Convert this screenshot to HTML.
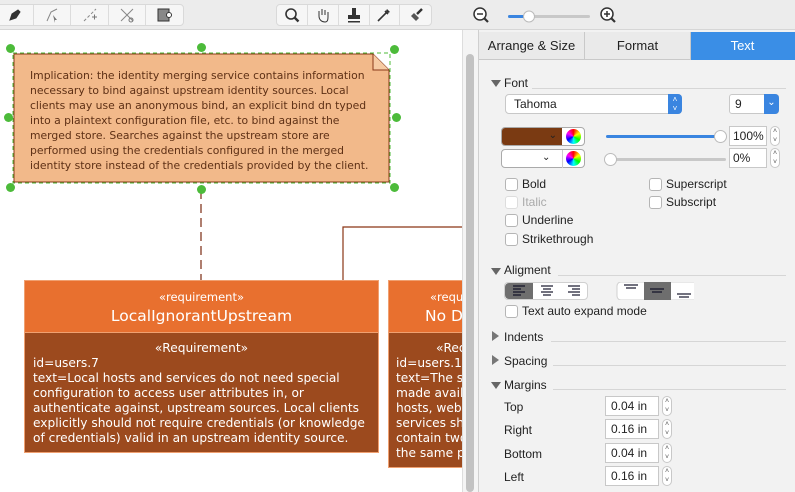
<!DOCTYPE html>
<html><head><meta charset="utf-8"><style>
*{box-sizing:border-box;margin:0;padding:0}
body{width:795px;height:492px;overflow:hidden;background:#fff;font-family:"Liberation Sans",sans-serif;position:relative;font-size:12px;color:#222}
.abs{position:absolute}
.tb{left:0;top:0;width:795px;height:30px;background:#ececec;border-bottom:1px solid #d6d6d6}
.grp{top:4px;height:22px;background:#f6f6f6;border:1px solid #d9d9d9;border-radius:4px;display:flex}
.grp div{width:38px;height:20px;border-right:1px solid #dcdcdc;display:flex;align-items:center;justify-content:center}
.grp div:last-child{border-right:none}
.panel{left:478px;top:30px;width:317px;height:462px;background:#f2f2f2;border-left:1px solid #cfcfcf}
.tab{top:32px;height:28px;line-height:28px;text-align:center;font-size:13px;background:#eaeaea;border-right:1px solid #c9c9c9;border-bottom:1px solid #c9c9c9}
.sec{font-size:12px;color:#222}
.line{height:1px;background:#d6d6d6}
.tri{width:0;height:0;border-left:5px solid transparent;border-right:5px solid transparent;border-top:7px solid #666}
.trir{width:0;height:0;border-top:5px solid transparent;border-bottom:5px solid transparent;border-left:7px solid #777}
.cb{width:13px;height:13px;border:1px solid #b5b5b5;border-radius:3px;background:#fff}
.lbl{font-size:12px}
.inp{background:#fff;border:1px solid #c8c8c8;height:20px;font-size:12px;padding-left:5px;line-height:18px}
.step{width:10px;height:20px;border:1px solid #c8c8c8;border-radius:5px;background:#fff;font-size:7px;text-align:center;line-height:9px;color:#555}
.h{width:9px;height:9px;border-radius:50%;background:#4cbb3a}
</style></head><body>
<div class="abs tb"></div>
<div class="abs grp" style="left:-4px;width:188px">
 <div><svg width="16" height="16"><path d="M3 13l2-6 6-4 2 2-4 6z M3 13l4-4" fill="#333" stroke="#333"/></svg></div>
 <div><svg width="16" height="16"><path d="M3 14l4-9 6-3" fill="none" stroke="#888"/><path d="M9 8l4 5-2 0 0 3z" fill="#777"/></svg></div>
 <div><svg width="16" height="16"><path d="M2 14l12-12" stroke="#888" fill="none" stroke-dasharray="3 2"/><path d="M10 10h5M12.5 7.5v5" stroke="#777"/></svg></div>
 <div><svg width="16" height="16"><path d="M2 14L14 2M2 2l12 12" stroke="#888" fill="none"/><circle cx="12" cy="13" r="2" fill="none" stroke="#777"/></svg></div>
 <div><svg width="16" height="16"><rect x="2" y="2" width="11" height="12" fill="#888" stroke="#333"/><circle cx="13" cy="8" r="2.5" fill="#fff" stroke="#333"/></svg></div>
</div>
<div class="abs grp" style="left:276px;width:156px">
 <div><svg width="16" height="16"><circle cx="7" cy="7" r="5" fill="none" stroke="#333" stroke-width="1.6"/><path d="M10.5 10.5l4 4" stroke="#333" stroke-width="2.4"/></svg></div>
 <div><svg width="16" height="16"><path d="M4 9V4M7 8V2M10 8V3M13 9V5M4 9c0 4 3 6 6 6s3-3 3-6" fill="none" stroke="#333"/></svg></div>
 <div><svg width="16" height="16"><rect x="6" y="1" width="4" height="7" fill="#333"/><rect x="2" y="8" width="12" height="4" fill="#333"/><rect x="2" y="14" width="12" height="1.5" fill="#333"/></svg></div>
 <div><svg width="16" height="16"><path d="M2 14l8-8M9 4l3 3" stroke="#333" stroke-width="1.6"/><path d="M11 2l3 3-2 1-2-2z" fill="#333"/></svg></div>
 <div><svg width="16" height="16"><path d="M3 9l5 5 3-3-5-5z" fill="#555"/><path d="M9 7l5-5" stroke="#333" stroke-width="2.4"/></svg></div>
</div>
<svg class="abs" style="left:472px;top:6px" width="150" height="20"><circle cx="8" cy="8" r="6" fill="#fff" stroke="#333" stroke-width="1.5"/><path d="M5 8h6" stroke="#333" stroke-width="1.5"/><path d="M12 12l4 4" stroke="#333" stroke-width="2.2"/>
<rect x="36" y="9" width="82" height="3" rx="1.5" fill="#c8c8c8"/><rect x="36" y="9" width="16" height="3" rx="1.5" fill="#3a85e0"/><circle cx="57" cy="10.5" r="5.5" fill="#fff" stroke="#bbb"/>
<circle cx="135" cy="8" r="6" fill="#fff" stroke="#333" stroke-width="1.5"/><path d="M132 8h6M135 5v6" stroke="#333" stroke-width="1.5"/><path d="M139 12l4 4" stroke="#333" stroke-width="2.2"/></svg>

<!-- canvas -->
<div class="abs" style="left:462px;top:30px;width:16px;height:462px;background:#f4f4f4;border-left:1px solid #ddd"></div>
<div class="abs" style="left:466px;top:54px;width:8px;height:438px;background:#c2c2c2;border-radius:4px"></div>

<svg class="abs" style="left:0;top:30px" width="462" height="462">
 <path d="M201 160v110" stroke="#7a2a10" stroke-width="1.2" stroke-dasharray="9 5"/>
 <path d="M343 250V197h119" fill="none" stroke="#8a3515" stroke-width="1.2"/>
 <path d="M14 24h359l16 16v112H14z" fill="#f2b98a" stroke="#8a3a1a"/>
 <path d="M373 24v16h16" fill="#f6cba4" stroke="#8a3a1a"/>
 <rect x="13" y="23" width="377" height="130" fill="none" stroke="#4cbb3a" stroke-dasharray="4 3"/>
</svg>
<div class="abs h" style="left:6px;top:44px"></div><div class="abs h" style="left:197px;top:43px"></div><div class="abs h" style="left:390px;top:45px"></div>
<div class="abs h" style="left:4px;top:113px"></div><div class="abs h" style="left:392px;top:113px"></div>
<div class="abs h" style="left:6px;top:183px"></div><div class="abs h" style="left:197px;top:185px"></div><div class="abs h" style="left:390px;top:183px"></div>
<div class="abs" style="left:30px;top:68px;width:355px;font-family:'DejaVu Sans',sans-serif;font-size:10.8px;line-height:15px;color:#5e3015;white-space:nowrap">Implication: the identity merging service contains information<br>necessary to bind against upstream identity sources. Local<br>clients may use an anonymous bind, an explicit bind dn typed<br>into a plaintext configuration file, etc. to bind against the<br>merged store. Searches against the upstream store are<br>performed using the credentials configured in the merged<br>identity store instead of the credentials provided by the client.</div>

<div class="abs" style="left:24px;top:280px;width:355px;height:173px;background:#9c4a1e;border:1px solid #f0a070;font-family:'DejaVu Sans',sans-serif;color:#fff;overflow:hidden">
 <div style="height:52px;background:#e8702f;border-bottom:1px solid #f0a070;text-align:center"><div style="font-size:11.5px;padding-top:9px">«requirement»</div><div style="font-size:15.5px;margin-top:3px">LocalIgnorantUpstream</div></div>
 <div style="font-size:12.2px;line-height:15px;padding:8px 0 0 8px;white-space:nowrap"><div style="text-align:center;padding-right:8px">«Requirement»</div>id=users.7<br>text=Local hosts and services do not need special<br>configuration to access user attributes in, or<br>authenticate against, upstream sources. Local clients<br>explicitly should not require credentials (or knowledge<br>of credentials) valid in an upstream identity source.</div>
</div>
<div class="abs" style="left:388px;top:280px;width:74px;height:188px;overflow:hidden">
<div style="width:200px;height:188px;background:#9c4a1e;border:1px solid #f0a070;font-family:'DejaVu Sans',sans-serif;color:#fff">
 <div style="height:52px;background:#e8702f;border-bottom:1px solid #f0a070"><div style="font-size:11.5px;padding:9px 0 0 41px">«requirement»</div><div style="font-size:15.5px;margin:3px 0 0 36px">No Duplicates</div></div>
 <div style="font-size:12.2px;line-height:15px;padding:8px 0 0 7px;white-space:nowrap"><div style="padding-left:40px">«Requirement»</div>id=users.11<br>text=The same<br>made available<br>hosts, web<br>services should<br>contain two<br>the same p</div>
</div></div>

<!-- panel -->
<div class="abs panel"></div>
<div class="abs tab" style="left:479px;width:106px">Arrange &amp; Size</div>
<div class="abs tab" style="left:585px;width:106px">Format</div>
<div class="abs tab" style="left:691px;width:104px;background:#3a8ee6;color:#fff;border-color:#3a8ee6">Text</div>

<div class="abs tri" style="left:491px;top:80px"></div><div class="abs sec" style="left:504px;top:76px">Font</div><div class="abs line" style="left:532px;top:88px;width:254px"></div>
<div class="abs inp" style="left:505px;top:94px;width:177px;border-radius:4px;padding-left:8px">Tahoma</div>
<div class="abs" style="left:668px;top:94px;width:14px;height:20px;background:#3a85e0;border-radius:0 4px 4px 0;color:#fff;font-size:8px;text-align:center;line-height:9px;padding-top:1px">˄<br>˅</div>
<div class="abs inp" style="left:729px;top:94px;width:50px;border-radius:3px">9</div>
<div class="abs" style="left:764px;top:94px;width:15px;height:20px;background:#3a85e0;border-radius:0 4px 4px 0;color:#fff;font-size:10px;text-align:center;line-height:18px">⌄</div>

<div class="abs" style="left:501px;top:127px;width:84px;height:19px;border:1px solid #aaa;border-radius:4px;background:#fff;overflow:hidden"><div style="width:60px;height:19px;background:#7a3a12;color:#222;text-align:right;padding-right:5px;font-size:10px;line-height:16px">⌄</div></div>
<div class="abs" style="left:566px;top:129px;width:15px;height:15px;border-radius:50%;background:conic-gradient(red,yellow,lime,cyan,blue,magenta,red)"></div>
<div class="abs" style="left:501px;top:149px;width:84px;height:19px;border:1px solid #aaa;border-radius:4px;background:#fff"><div style="position:absolute;left:40px;top:0;font-size:10px;line-height:16px">⌄</div><div style="position:absolute;left:60px;top:0;width:1px;height:18px;background:#ccc"></div></div>
<div class="abs" style="left:566px;top:151px;width:15px;height:15px;border-radius:50%;background:conic-gradient(red,yellow,lime,cyan,blue,magenta,red)"></div>
<div class="abs" style="left:606px;top:135px;width:112px;height:3px;background:#3a85e0;border-radius:2px"></div>
<div class="abs" style="left:714px;top:130px;width:13px;height:13px;border-radius:50%;background:#fff;border:1px solid #bbb"></div>
<div class="abs" style="left:606px;top:158px;width:120px;height:3px;background:#c8c8c8;border-radius:2px"></div>
<div class="abs" style="left:604px;top:153px;width:13px;height:13px;border-radius:50%;background:#fff;border:1px solid #bbb"></div>
<div class="abs inp" style="left:729px;top:126px;width:38px;padding-left:3px">100%</div><div class="abs step" style="left:770px;top:126px">˄<br>˅</div>
<div class="abs inp" style="left:729px;top:148px;width:38px;padding-left:3px">0%</div><div class="abs step" style="left:770px;top:148px">˄<br>˅</div>

<div class="abs cb" style="left:505px;top:178px"></div><div class="abs lbl" style="left:522px;top:177px">Bold</div>
<div class="abs cb" style="left:505px;top:196px;border-color:#ddd"></div><div class="abs lbl" style="left:522px;top:195px;color:#aaa">Italic</div>
<div class="abs cb" style="left:505px;top:214px"></div><div class="abs lbl" style="left:522px;top:213px">Underline</div>
<div class="abs cb" style="left:505px;top:233px"></div><div class="abs lbl" style="left:522px;top:232px">Strikethrough</div>
<div class="abs cb" style="left:649px;top:178px"></div><div class="abs lbl" style="left:666px;top:177px">Superscript</div>
<div class="abs cb" style="left:649px;top:196px"></div><div class="abs lbl" style="left:666px;top:195px">Subscript</div>

<div class="abs tri" style="left:491px;top:268px"></div><div class="abs sec" style="left:504px;top:263px">Aligment</div><div class="abs line" style="left:558px;top:275px;width:228px"></div>
<div class="abs" style="left:504px;top:282px;width:84px;height:18px;background:#fff;border:1px solid #d0d0d0;border-radius:4px;display:flex">
 <div style="width:28px;background:#6e6e6e;border-radius:4px 0 0 4px"></div>
</div>
<svg class="abs" style="left:504px;top:282px" width="190" height="18">
 <path d="M9 4h12M9 7h8M9 10h12M9 13h8" stroke="#223" stroke-width="1.5"/>
 <path d="M37 4h12M39 7h8M37 10h12M39 13h8" stroke="#445" stroke-width="1.5"/>
 <path d="M64 4h12M68 7h8M64 10h12M68 13h8" stroke="#445" stroke-width="1.5"/>
 <rect x="113" y="0" width="82" height="18" rx="4" fill="#fff" stroke="#d0d0d0"/>
 <rect x="140" y="0" width="27" height="18" fill="#6e6e6e"/>
 <path d="M120 3h14M122 6h10" stroke="#445" stroke-width="1.5"/>
 <path d="M146 7h14M148 10h10" stroke="#223" stroke-width="1.5"/>
 <path d="M173 12h14M175 15h10" stroke="#445" stroke-width="1.5"/>
</svg>
<div class="abs cb" style="left:505px;top:305px"></div><div class="abs lbl" style="left:522px;top:304px">Text auto expand mode</div>

<div class="abs trir" style="left:492px;top:331px"></div><div class="abs sec" style="left:504px;top:330px">Indents</div><div class="abs line" style="left:551px;top:341px;width:235px"></div>
<div class="abs trir" style="left:492px;top:355px"></div><div class="abs sec" style="left:504px;top:354px">Spacing</div><div class="abs line" style="left:553px;top:365px;width:233px"></div>
<div class="abs tri" style="left:491px;top:382px"></div><div class="abs sec" style="left:504px;top:378px">Margins</div><div class="abs line" style="left:553px;top:389px;width:233px"></div>
<div class="abs lbl" style="left:504px;top:400px">Top</div><div class="abs inp" style="left:605px;top:396px;width:54px">0.04 in</div><div class="abs step" style="left:662px;top:396px">˄<br>˅</div>
<div class="abs lbl" style="left:504px;top:423px">Right</div><div class="abs inp" style="left:605px;top:419px;width:54px">0.16 in</div><div class="abs step" style="left:662px;top:419px">˄<br>˅</div>
<div class="abs lbl" style="left:504px;top:447px">Bottom</div><div class="abs inp" style="left:605px;top:443px;width:54px">0.04 in</div><div class="abs step" style="left:662px;top:443px">˄<br>˅</div>
<div class="abs lbl" style="left:504px;top:470px">Left</div><div class="abs inp" style="left:605px;top:466px;width:54px">0.16 in</div><div class="abs step" style="left:662px;top:466px">˄<br>˅</div>
</body></html>
